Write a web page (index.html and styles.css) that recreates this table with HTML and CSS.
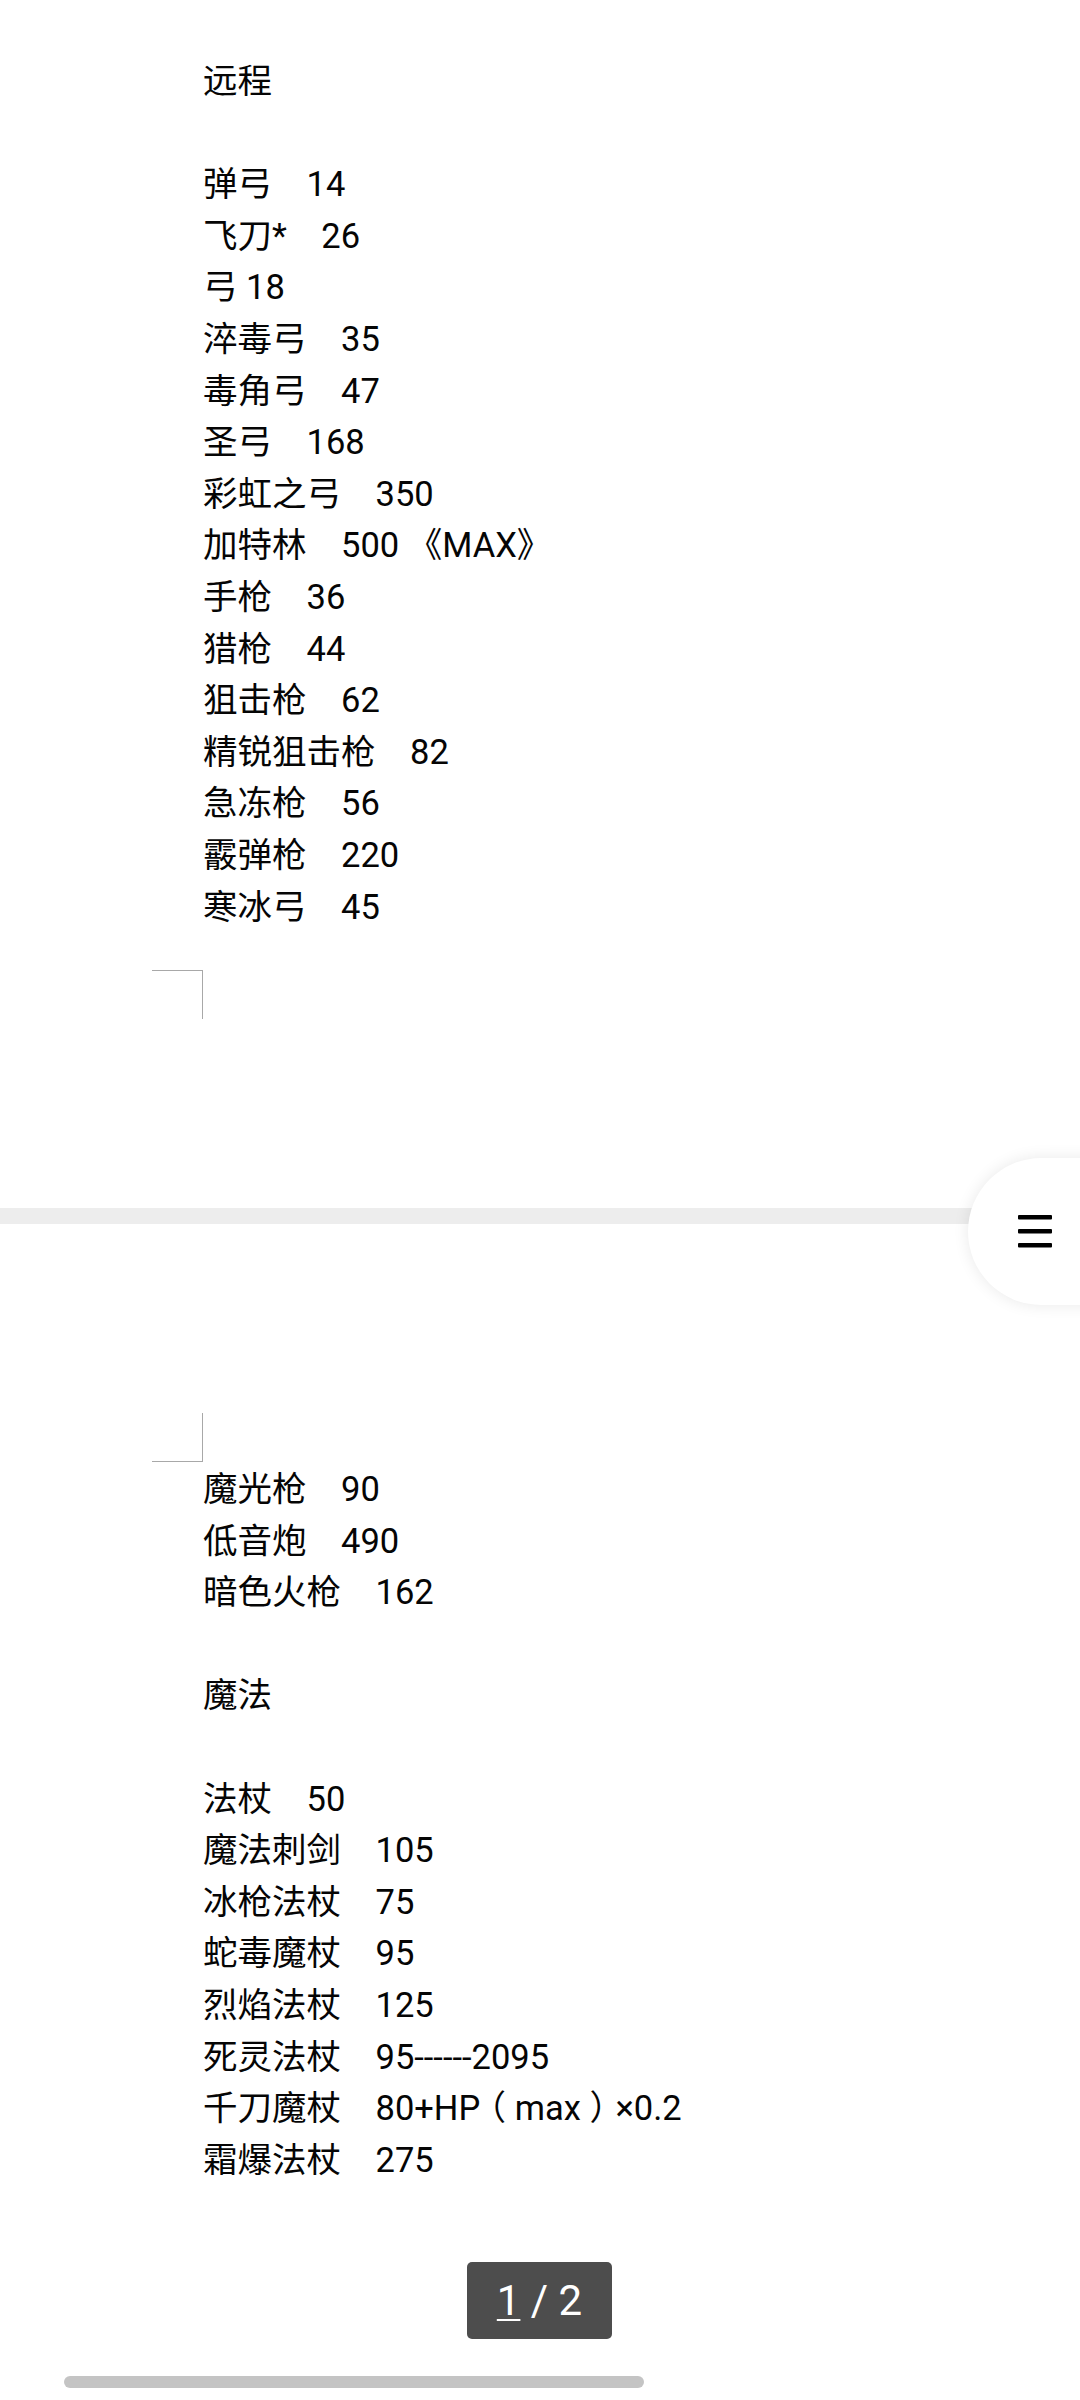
FILE: index.html
```html
<!DOCTYPE html>
<html lang="zh-CN">
<head>
    <meta charset="UTF-8">
    <meta name="viewport" content="width=device-width, initial-scale=1.0">
    <title>武器伤害</title>
    <link rel="stylesheet" href="styles.css">
</head>
<body>
    <div class="doc">
        <section class="page page-first">
            <div class="text-area mark-bottom">
                <p class="group">远程</p>
                <p>弹弓　14</p>
                <p>飞刀*　26</p>
                <p>弓 18</p>
                <p>淬毒弓　35</p>
                <p>毒角弓　47</p>
                <p>圣弓　168</p>
                <p>彩虹之弓　350</p>
                <p>加特林　500 《MAX》</p>
                <p>手枪　36</p>
                <p>猎枪　44</p>
                <p>狙击枪　62</p>
                <p>精锐狙击枪　82</p>
                <p>急冻枪　56</p>
                <p>霰弹枪　220</p>
                <p>寒冰弓　45</p>
            </div>
        </section>

        <div class="page-gap"></div>

        <section class="page page-next">
            <div class="text-area mark-top">
                <p>魔光枪　90</p>
                <p>低音炮　490</p>
                <p>暗色火枪　162</p>
                <p class="group spaced">魔法</p>
                <p>法杖　50</p>
                <p>魔法刺剑　105</p>
                <p>冰枪法杖　75</p>
                <p>蛇毒魔杖　95</p>
                <p>烈焰法杖　125</p>
                <p>死灵法杖　95------2095</p>
                <p>千刀魔杖　80+HP<span class="paren">（</span>max<span class="paren">）</span>×0.2</p>
                <p>霜爆法杖　275</p>
            </div>
        </section>
    </div>

    <button class="menu-fab" aria-label="目录">
        <svg width="34" height="33" viewBox="0 0 34 33">
            <rect x="0" y="0" width="34" height="4.6" rx="1"/>
            <rect x="0" y="14" width="34" height="4.6" rx="1"/>
            <rect x="0" y="28" width="34" height="4.6" rx="1"/>
        </svg>
    </button>

    <div class="pager"><span class="current">1</span> / 2</div>
    <div class="scroll-thumb"></div>
</body>
</html>
```

FILE: styles.css
```css
html, body {
    margin: 0;
    padding: 0;
    height: 2400px;
    overflow: hidden;
    background-color: #fff;
}
body {
    position: relative;
    font-family: Roboto, "Noto Sans CJK SC", sans-serif;
    color: #050505;
}
.doc {
    display: flex;
    flex-direction: column;
}
.page {
    background-color: #fff;
    padding-left: 203px;
}
.page-first {
    padding-top: 56px;
    padding-bottom: 238px;
}
.page-first .text-area {
    height: 914px;
}
.page-next {
    padding-top: 238px;
}
.page-next .text-area {
    padding-top: 2px;
}
.page-gap {
    height: 16px;
    background-color: #ededed;
}
.text-area {
    position: relative;
    font-size: 34.5px;
    line-height: 51.6px;
    text-spacing-trim: space-all;
}
.text-area p {
    margin: 0;
    white-space: pre;
}
.text-area .group {
    margin-bottom: 51.6px;
}
.text-area .spaced {
    margin-top: 51.6px;
}
.paren {
    font-feature-settings: "halt";
    padding: 0 0.25em;
}
/* margin corner marks */
.mark-bottom::before,
.mark-top::before {
    content: "";
    position: absolute;
    left: -51px;
    width: 51px;
    height: 49px;
    box-sizing: border-box;
    border: 0 solid #a8a8a8;
}
.mark-bottom::before {
    top: 100%;
    border-top-width: 1px;
    border-right-width: 1px;
}
.mark-top::before {
    bottom: 100%;
    border-bottom-width: 1px;
    border-right-width: 1px;
}
.menu-fab {
    position: absolute;
    left: 968px;
    top: 1158px;
    width: 130px;
    height: 147px;
    padding: 0 0 0 50px;
    border: none;
    border-radius: 73.5px 0 0 73.5px;
    background-color: #fff;
    box-shadow: 0 0 16px rgba(0, 0, 0, 0.09);
    display: flex;
    align-items: center;
    fill: #000;
}
.pager {
    position: absolute;
    left: 467px;
    top: 2262px;
    width: 145px;
    height: 77px;
    border-radius: 5px;
    background-color: #4d4d4d;
    color: #fff;
    font-size: 42px;
    display: flex;
    align-items: center;
    justify-content: center;
    white-space: pre;
}
.pager .current {
    text-decoration: underline;
    text-decoration-thickness: 2px;
    text-underline-offset: 4px;
}
.scroll-thumb {
    position: absolute;
    left: 64px;
    top: 2376px;
    width: 580px;
    height: 12px;
    border-radius: 6px;
    background-color: #c4c4c4;
}
```
